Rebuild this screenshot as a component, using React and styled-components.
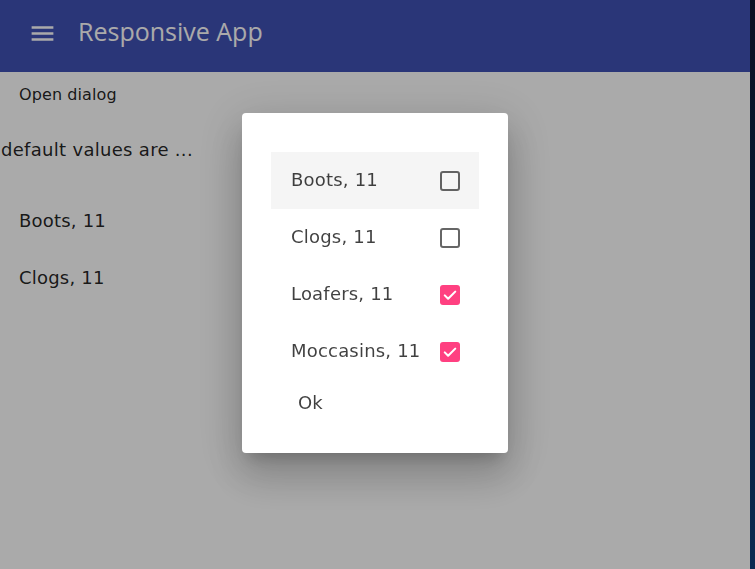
import React, { useState } from 'react';
import styled, { createGlobalStyle } from 'styled-components';

const GlobalStyle = createGlobalStyle`
  html, body {
    margin: 0;
    padding: 0;
    height: 100%;
    overflow: hidden;
  }
  body {
    font-family: "DejaVu Sans", Verdana, sans-serif;
    background: #ffffff;
  }
  #root {
    height: 100%;
  }
`;

const Frame = styled.div`
  display: flex;
  height: 100%;
`;

const Page = styled.div`
  flex: 1;
  display: flex;
  flex-direction: column;
  background: #ffffff;
`;

const EdgeStrip = styled.div`
  width: 5px;
  background: linear-gradient(180deg, #0a1022 0%, #0b1e3c 60%, #0c2a52 100%);
`;

const AppBar = styled.header`
  height: 72px;
  box-sizing: border-box;
  padding: 0 0 10px 28px;
  display: flex;
  align-items: center;
  background: #3f51b5;
  color: #ffffff;
`;

const MenuButton = styled.span`
  display: flex;
  width: 29px;
  height: 29px;
  margin-right: 21px;
  margin-top: 4px;
`;

const AppTitle = styled.h1`
  margin: 0;
  font-family: "Open Sans", "Noto Sans", sans-serif;
  font-size: 25px;
  font-weight: 400;
  color: #ffffff;
`;

const Content = styled.main`
  display: flex;
  flex-direction: column;
`;

const TextButton = styled.button`
  align-self: flex-start;
  border: none;
  background: none;
  font-family: inherit;
  font-size: 16px;
  letter-spacing: 0.1px;
  color: rgba(0, 0, 0, 0.87);
  padding: 5px 19px 0;
  height: 40px;
  cursor: pointer;
`;

const Note = styled.p`
  margin: 27px 0 0 1px;
  font-size: 18px;
  letter-spacing: 0.3px;
  color: rgba(0, 0, 0, 0.87);
`;

const ValueList = styled.ul`
  list-style: none;
  margin: 32px 0 0;
  padding: 0;
`;

const ValueItem = styled.li`
  height: 57px;
  display: flex;
  align-items: center;
  padding-left: 19px;
  font-size: 18px;
  letter-spacing: 0.2px;
  color: rgba(0, 0, 0, 0.87);
`;

const Backdrop = styled.div`
  position: fixed;
  top: 0;
  left: 0;
  right: 5px;
  bottom: 0;
  background: rgba(0, 0, 0, 0.333);
  display: flex;
  align-items: center;
  justify-content: center;
`;

const Dialog = styled.div`
  width: 266px;
  height: 340px;
  margin-top: -3px;
  box-sizing: border-box;
  background: #ffffff;
  border-radius: 4px;
  padding: 39px 29px 0;
  box-shadow: 0 11px 15px -7px rgba(0, 0, 0, 0.2), 0 24px 38px 3px rgba(0, 0, 0, 0.14),
    0 9px 46px 8px rgba(0, 0, 0, 0.12);
  display: flex;
  flex-direction: column;
`;

const OptionList = styled.ul`
  list-style: none;
  margin: 0;
  padding: 0;
`;

const Option = styled.li`
  height: 57px;
  display: flex;
  align-items: center;
  justify-content: space-between;
  padding: 0 19px 2px 20px;
  box-sizing: border-box;
  font-size: 18px;
  letter-spacing: 0.2px;
  color: rgba(0, 0, 0, 0.75);
  background: ${p => (p.$hover ? '#f5f5f5' : 'transparent')};
  cursor: pointer;
`;

const Box = styled.span`
  width: 20px;
  height: 20px;
  margin-top: 2px;
  box-sizing: border-box;
  border-radius: 3px;
  border: ${p => (p.$checked ? 'none' : '2px solid rgba(0, 0, 0, 0.6)')};
  background: ${p => (p.$checked ? '#ff4081' : 'transparent')};
  display: flex;
  align-items: center;
  justify-content: center;
`;

const OkButton = styled.button`
  align-self: flex-start;
  margin: 6px 0 0 12px;
  border: none;
  background: none;
  font-family: inherit;
  font-size: 18px;
  color: rgba(0, 0, 0, 0.75);
  padding: 6px 15px;
  cursor: pointer;
`;

const MenuIcon = () => (
  <svg width="29" height="29" viewBox="0 0 24 24" fill="#ffffff">
    <path d="M3 18h18v-2H3v2zm0-5h18v-2H3v2zm0-7v2h18V6H3z" />
  </svg>
);

const Check = () => (
  <svg width="18" height="18" viewBox="0 0 24 24" fill="none" stroke="#ffffff" strokeWidth="2.8" strokeLinecap="round" strokeLinejoin="round">
    <polyline points="5,12.5 9.5,17 19,7.5" />
  </svg>
);

const initial = [
  { label: 'Boots, 11', checked: false },
  { label: 'Clogs, 11', checked: false },
  { label: 'Loafers, 11', checked: true },
  { label: 'Moccasins, 11', checked: true },
];

export default function App() {
  const [options, setOptions] = useState(initial);

  const toggle = i =>
    setOptions(opts => opts.map((o, idx) => (idx === i ? { ...o, checked: !o.checked } : o)));

  return (
    <>
      <GlobalStyle />
      <Frame>
        <Page>
          <AppBar>
            <MenuButton>
              <MenuIcon />
            </MenuButton>
            <AppTitle>Responsive App</AppTitle>
          </AppBar>
          <Content>
            <TextButton>Open dialog</TextButton>
            <Note>default values are ...</Note>
            <ValueList>
              <ValueItem>Boots, 11</ValueItem>
              <ValueItem>Clogs, 11</ValueItem>
            </ValueList>
          </Content>
        </Page>
        <EdgeStrip />
      </Frame>
      <Backdrop>
        <Dialog>
          <OptionList>
            {options.map((o, i) => (
              <Option key={o.label} $hover={i === 0} onClick={() => toggle(i)}>
                {o.label}
                <Box $checked={o.checked}>{o.checked && <Check />}</Box>
              </Option>
            ))}
          </OptionList>
          <OkButton>Ok</OkButton>
        </Dialog>
      </Backdrop>
    </>
  );
}
